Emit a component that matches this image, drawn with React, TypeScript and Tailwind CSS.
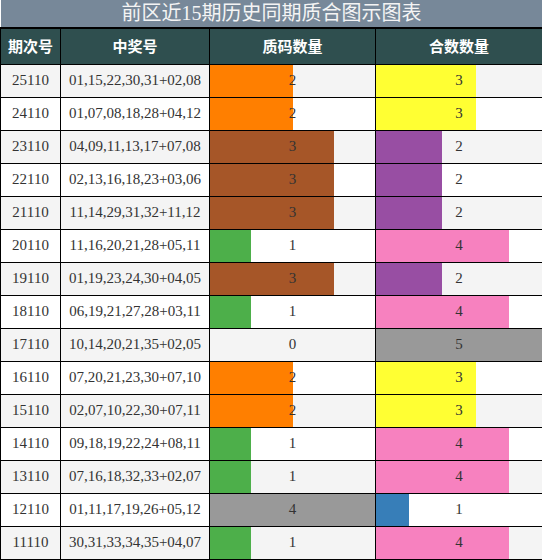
import React from 'react';

type Row = { issue: string; nums: string; prime: number; composite: number };

const rows: Row[] = [
  { issue: '25110', nums: '01,15,22,30,31+02,08', prime: 2, composite: 3 },
  { issue: '24110', nums: '01,07,08,18,28+04,12', prime: 2, composite: 3 },
  { issue: '23110', nums: '04,09,11,13,17+07,08', prime: 3, composite: 2 },
  { issue: '22110', nums: '02,13,16,18,23+03,06', prime: 3, composite: 2 },
  { issue: '21110', nums: '11,14,29,31,32+11,12', prime: 3, composite: 2 },
  { issue: '20110', nums: '11,16,20,21,28+05,11', prime: 1, composite: 4 },
  { issue: '19110', nums: '01,19,23,24,30+04,05', prime: 3, composite: 2 },
  { issue: '18110', nums: '06,19,21,27,28+03,11', prime: 1, composite: 4 },
  { issue: '17110', nums: '10,14,20,21,35+02,05', prime: 0, composite: 5 },
  { issue: '16110', nums: '07,20,21,23,30+07,10', prime: 2, composite: 3 },
  { issue: '15110', nums: '02,07,10,22,30+07,11', prime: 2, composite: 3 },
  { issue: '14110', nums: '09,18,19,22,24+08,11', prime: 1, composite: 4 },
  { issue: '13110', nums: '07,16,18,32,33+02,07', prime: 1, composite: 4 },
  { issue: '12110', nums: '01,11,17,19,26+05,12', prime: 4, composite: 1 },
  { issue: '11110', nums: '30,31,33,34,35+04,07', prime: 1, composite: 4 },
];

const primeColors: Record<number, string> = {
  1: 'bg-[#4daf4a]',
  2: 'bg-[#ff7f00]',
  3: 'bg-[#a65628]',
  4: 'bg-[#999999]',
};

const compositeColors: Record<number, string> = {
  1: 'bg-[#377eb8]',
  2: 'bg-[#984ea3]',
  3: 'bg-[#ffff33]',
  4: 'bg-[#f781bf]',
  5: 'bg-[#999999]',
};

const BarCell = ({ value, max, color }: { value: number; max: number; color?: string }) => (
  <td className="border border-black p-0">
    <div className="relative h-[32px] flex items-center justify-center">
      {value > 0 && (
        <div className={`absolute left-0 top-0 bottom-0 ${color}`} style={{ width: `${(value / max) * 100}%` }} />
      )}
      <span className="relative">{value}</span>
    </div>
  </td>
);

export default function App() {
  return (
    <div className="w-[542px] bg-white" style={{ fontFamily: '"Liberation Serif", "Noto Sans CJK SC", serif' }}>
      <table className="w-[542px] border-collapse table-fixed">
        <colgroup>
          <col className="w-[60px]" />
          <col className="w-[149px]" />
          <col className="w-[166px]" />
          <col className="w-[167px]" />
        </colgroup>
        <thead>
          <tr>
            <th colSpan={4} className="h-[28px] p-0 bg-[#778899] text-[#f4f4f4] text-[20px] font-normal leading-[27px] border-b-2 border-black">
              前区近15期历史同期质合图示图表
            </th>
          </tr>
          <tr className="bg-[#2f4f4f] text-white text-[15px] font-bold" style={{ fontFamily: '"Noto Sans CJK SC", sans-serif' }}>
            <th className="h-[36px] border border-black p-0">期次号</th>
            <th className="border border-black p-0">中奖号</th>
            <th className="border border-black p-0">质码数量</th>
            <th className="border border-black p-0">合数数量</th>
          </tr>
        </thead>
        <tbody className="text-[15px] text-[#333333]">
          {rows.map((r, i) => (
            <tr key={r.issue} className={i % 2 === 0 ? 'bg-[#f4f4f4]' : 'bg-white'}>
              <td className="h-[33px] border border-black p-0 text-center">{r.issue}</td>
              <td className="border border-black p-0 text-center">{r.nums}</td>
              <BarCell value={r.prime} max={4} color={primeColors[r.prime]} />
              <BarCell value={r.composite} max={5} color={compositeColors[r.composite]} />
            </tr>
          ))}
        </tbody>
      </table>
    </div>
  );
}
